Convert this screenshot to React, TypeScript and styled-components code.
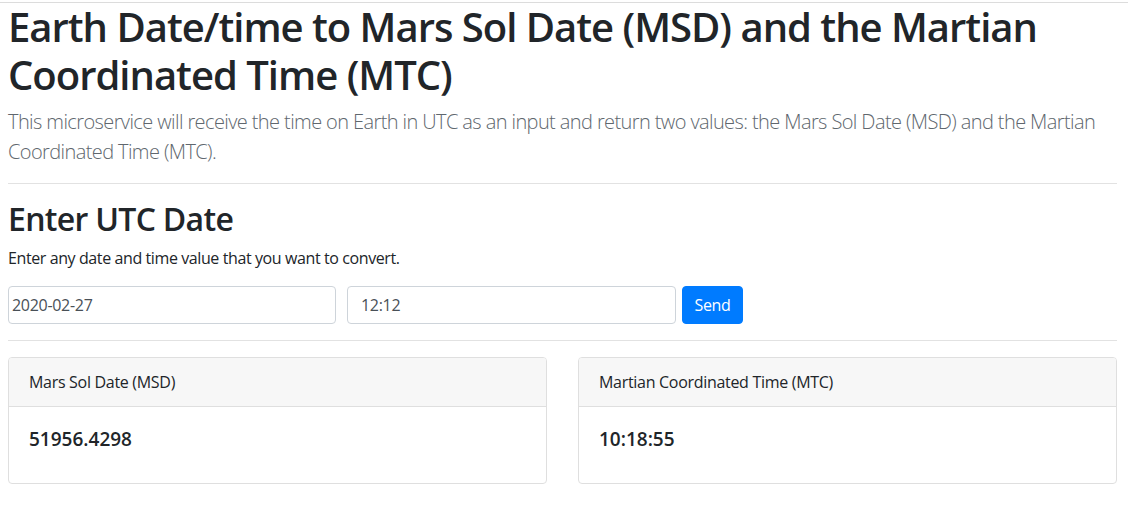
import React from "react";
import styled, { createGlobalStyle } from "styled-components";

const GlobalStyle = createGlobalStyle`
  html, body {
    margin: 0;
    padding: 0;
    background: #ffffff;
  }
  body {
    font-family: "Open Sans", "Noto Sans", sans-serif;
    color: #212529;
    font-size: 16px;
    line-height: 1.5;
  }
  * { box-sizing: border-box; }
`;

const TopRule = styled.div`
  margin-top: 2px;
  height: 1px;
  background: #dcdcdc;
`;

const Page = styled.main`
  padding: 0 11px 0 8px;
`;

const Title = styled.h1`
  margin: 0 0 8px;
  font-size: 40px;
  font-weight: 600;
  line-height: 48px;
  letter-spacing: -1px;
`;

const Lead = styled.p`
  margin: 0 0 16px;
  font-size: 20px;
  font-weight: 300;
  line-height: 30px;
  color: #60676e;
  letter-spacing: -0.6px;
`;

const Rule = styled.hr`
  margin: 16px 0;
  border: 0;
  border-top: 1px solid #e2e2e2;
`;

const SectionTitle = styled.h2`
  margin: 0 0 8px;
  font-size: 32px;
  font-weight: 600;
  line-height: 38px;
  letter-spacing: -0.7px;
`;

const Help = styled.p`
  margin: 0 0 16px;
  font-size: 16px;
  line-height: 24px;
  letter-spacing: -0.4px;
`;

const Form = styled.form`
  display: flex;
  align-items: center;
`;

const Input = styled.input<{ $w: number; $pad: number; $gap: number }>`
  width: ${(p) => p.$w}px;
  height: 38px;
  margin-right: ${(p) => p.$gap}px;
  padding: 0 12px 0 ${(p) => p.$pad}px;
  border: 1px solid #ced4da;
  border-radius: 4px;
  font-family: inherit;
  font-size: 16px;
  letter-spacing: -0.3px;
  color: #495057;
  background: #fff;
  outline: none;
`;

const Button = styled.button`
  height: 38px;
  width: 61px;
  padding: 0;
  border: 1px solid #007bff;
  border-radius: 4px;
  background: #007bff;
  color: #fff;
  font-family: inherit;
  font-size: 16px;
  letter-spacing: -0.3px;
`;

const CardGrid = styled.div`
  display: grid;
  grid-template-columns: 1fr 1fr;
  column-gap: 31px;
`;

const Card = styled.section`
  border: 1px solid #dfdfdf;
  border-radius: 4px;
  overflow: hidden;
`;

const CardHeader = styled.header`
  padding: 12px 20px;
  background: #f7f7f7;
  border-bottom: 1px solid #dfdfdf;
  font-size: 16px;
  line-height: 24px;
  letter-spacing: -0.3px;
`;

const CardBody = styled.div`
  padding: 20px;
`;

const Value = styled.h5`
  margin: 0 0 12px;
  font-size: 19px;
  font-weight: 600;
  line-height: 24px;
`;

export default function App() {
  return (
    <>
      <GlobalStyle />
      <TopRule />
      <Page>
        <Title>
          Earth Date/time to Mars Sol Date (MSD) and the Martian Coordinated Time (MTC)
        </Title>
        <Lead>
          This microservice will receive the time on Earth in UTC as an input and return two
          values: the Mars Sol Date (MSD) and the Martian Coordinated Time (MTC).
        </Lead>
        <Rule />
        <SectionTitle>Enter UTC Date</SectionTitle>
        <Help>Enter any date and time value that you want to convert.</Help>
        <Form onSubmit={(e) => e.preventDefault()}>
          <Input $w={328} $pad={3} $gap={11} defaultValue="2020-02-27" />
          <Input $w={329} $pad={13} $gap={6} defaultValue="12:12" />
          <Button type="submit">Send</Button>
        </Form>
        <Rule />
        <CardGrid>
          <Card>
            <CardHeader>Mars Sol Date (MSD)</CardHeader>
            <CardBody>
              <Value>51956.4298</Value>
            </CardBody>
          </Card>
          <Card>
            <CardHeader>Martian Coordinated Time (MTC)</CardHeader>
            <CardBody>
              <Value>10:18:55</Value>
            </CardBody>
          </Card>
        </CardGrid>
      </Page>
    </>
  );
}
